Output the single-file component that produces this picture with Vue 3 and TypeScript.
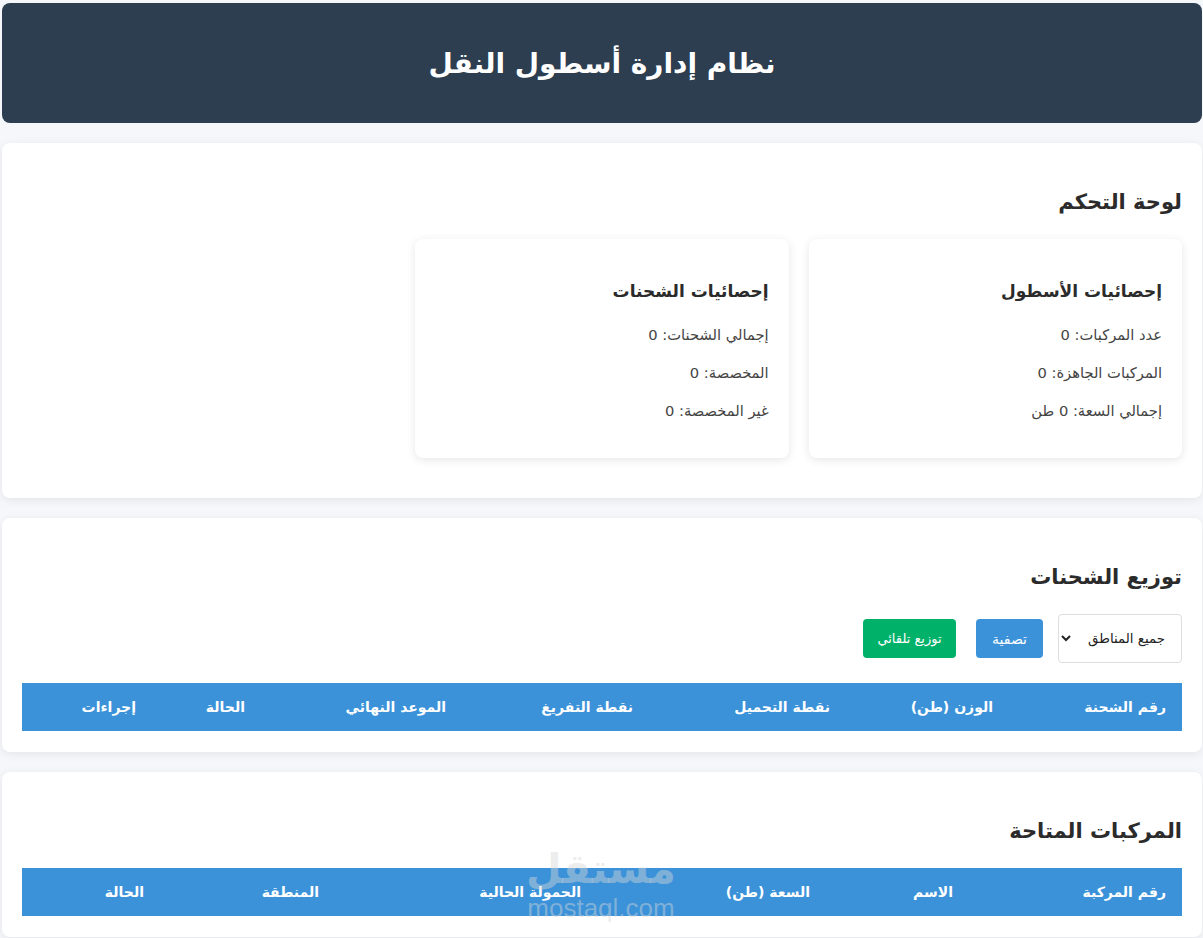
<script setup lang="ts">
// Fleet management dashboard: stats cards plus two empty tables

interface Column {
  label: string
  width: number
}

const shipmentColumns: Column[] = [
  { label: 'رقم الشحنة', width: 173 },
  { label: 'الوزن (طن)', width: 163 },
  { label: 'نقطة التحميل', width: 197 },
  { label: 'نقطة التفريغ', width: 187 },
  { label: 'الموعد النهائي', width: 201 },
  { label: 'الحالة', width: 109 },
  { label: 'إجراءات', width: 130 },
]

const vehicleColumns: Column[] = [
  { label: 'رقم المركبة', width: 213 },
  { label: 'الاسم', width: 143 },
  { label: 'السعة (طن)', width: 229 },
  { label: 'الحمولة الحالية', width: 262 },
  { label: 'المنطقة', width: 175 },
  { label: 'الحالة', width: 138 },
]

const statCards = [
  {
    title: 'إحصائيات الأسطول',
    lines: ['عدد المركبات: 0', 'المركبات الجاهزة: 0', 'إجمالي السعة: 0 طن'],
  },
  {
    title: 'إحصائيات الشحنات',
    lines: ['إجمالي الشحنات: 0', 'المخصصة: 0', 'غير المخصصة: 0'],
  },
]
</script>

<template>
  <div class="page" dir="rtl">
    <header class="top">
      <h1>نظام إدارة أسطول النقل</h1>
    </header>

    <section class="card">
      <h2>لوحة التحكم</h2>
      <div class="stats">
        <div v-for="stat in statCards" :key="stat.title" class="stat">
          <h3>{{ stat.title }}</h3>
          <p v-for="line in stat.lines" :key="line">{{ line }}</p>
        </div>
      </div>
    </section>

    <section class="card tight">
      <h2>توزيع الشحنات</h2>
      <div class="controls">
        <select class="region">
          <option>جميع المناطق</option>
        </select>
        <button class="btn blue" type="button">تصفية</button>
        <button class="btn green" type="button">توزيع تلقائي</button>
      </div>
      <table>
        <colgroup>
          <col v-for="col in shipmentColumns" :key="col.label" :width="col.width" />
        </colgroup>
        <thead>
          <tr>
            <th v-for="col in shipmentColumns" :key="col.label">{{ col.label }}</th>
          </tr>
        </thead>
      </table>
    </section>

    <section class="card tight">
      <h2>المركبات المتاحة</h2>
      <table>
        <colgroup>
          <col v-for="col in vehicleColumns" :key="col.label" :width="col.width" />
        </colgroup>
        <thead>
          <tr>
            <th v-for="col in vehicleColumns" :key="col.label">{{ col.label }}</th>
          </tr>
        </thead>
      </table>
    </section>

    <div class="watermark" dir="rtl">
      <span class="wm-ar">مستقل</span>
      <span class="wm-en">mostaql.com</span>
    </div>
  </div>
</template>

<style>
body {
  background: #f5f7fa;
}
</style>

<style scoped>
.page {
  position: relative;
  height: 938px;
  box-sizing: border-box;
  padding: 3px 1px 0 2px;
  overflow: hidden;
  font-family: 'DejaVu Sans', sans-serif;
  color: #333;
}

.top {
  height: 120px;
  display: flex;
  align-items: center;
  justify-content: center;
  background: #2c3e50;
  border-radius: 8px;
  margin-bottom: 20px;
}

h1 {
  margin: 0;
  font-size: 28px;
  font-weight: 700;
  color: #fff;
}

.card {
  background: #fff;
  border-radius: 8px;
  box-shadow: 0 2px 10px rgba(0, 0, 0, 0.08);
  padding: 40px 20px;
  margin-bottom: 20px;
}

.card.tight {
  padding-bottom: 21px;
}

h2 {
  margin: 0 0 18px;
  height: 38px;
  line-height: 38px;
  font-size: 21px;
  font-weight: 700;
  color: #2b2b2b;
}

.stats {
  display: grid;
  grid-template-columns: repeat(3, 1fr);
  gap: 20px;
}

.stat {
  height: 219px;
  box-sizing: border-box;
  padding: 40px 20px 0;
  background: #fff;
  border-radius: 8px;
  box-shadow: 0 2px 10px rgba(0, 0, 0, 0.1);
}

h3 {
  margin: 0 0 13px;
  height: 24px;
  line-height: 24px;
  font-size: 17px;
  font-weight: 700;
  color: #2b2b2b;
}

.stat p {
  margin: 0;
  height: 38px;
  line-height: 38px;
  font-size: 14.7px;
  color: #444;
}

.controls {
  display: flex;
  align-items: center;
  gap: 15px;
  height: 49px;
  margin-bottom: 20px;
}

.region {
  width: 124px;
  height: 49px;
  padding: 0 12px;
  background: #fff;
  border: 1px solid #ddd;
  border-radius: 4px;
  font-family: inherit;
  font-size: 13.4px;
  color: #222;
}

.btn {
  height: 39px;
  padding: 0;
  border: 0;
  border-radius: 4px;
  font-family: inherit;
  font-size: 13px;
  color: #fff;
}

.blue {
  width: 67px;
  background: #3b92d9;
  font-size: 14px;
}

.green {
  width: 93px;
  margin-right: 5px;
  background: #00b16a;
}

table {
  width: 100%;
  table-layout: fixed;
  border-collapse: collapse;
}

th {
  height: 48px;
  padding: 0 16px;
  background: #3b92d9;
  color: #fff;
  font-size: 14px;
  font-weight: 700;
  text-align: right;
  white-space: nowrap;
}

.watermark {
  position: absolute;
  left: 528px;
  top: 842px;
  width: 146px;
  display: flex;
  flex-direction: column;
  align-items: center;
  color: rgba(215, 215, 215, 0.45);
  pointer-events: none;
}

.wm-ar {
  height: 54px;
  line-height: 54px;
  font-size: 41px;
  font-weight: 700;
}

.wm-en {
  height: 24px;
  line-height: 24px;
  font-family: 'Liberation Sans', sans-serif;
  font-size: 26px;
}
</style>
